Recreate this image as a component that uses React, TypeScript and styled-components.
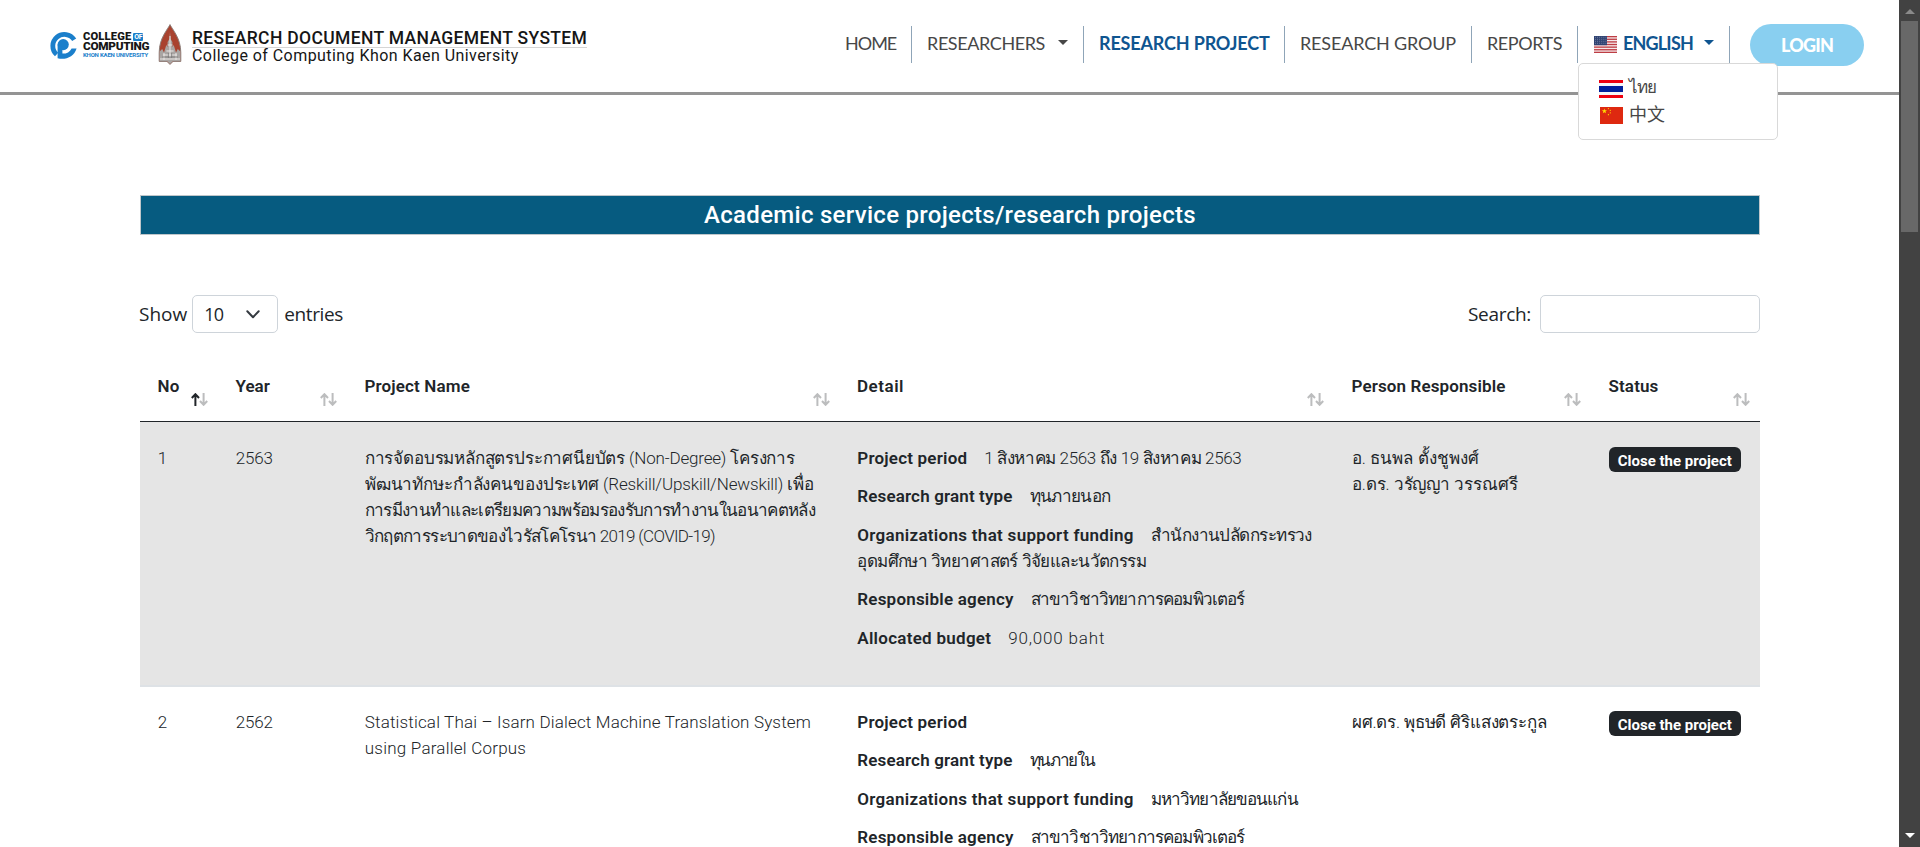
import React from 'react';
import styled, { createGlobalStyle } from 'styled-components';

const kanit = 'Roboto, "Noto Sans", sans-serif';
const navFont = 'Lato, "Noto Sans CJK SC", sans-serif';
const uiFont = '"Open Sans", "Noto Sans", sans-serif';

const GlobalStyle = createGlobalStyle`
  * { box-sizing: border-box; }
  body { margin: 0; background: #fff; color: #212529; font-family: ${kanit}; overflow: hidden; }
`;

const Window = styled.div`display: flex; width: 1920px; height: 847px; overflow: hidden;`;
const Page = styled.div`flex: 1; min-width: 0; overflow: hidden;`;

const Text = styled.span<{ $t?: number }>`letter-spacing: ${p => p.$t ?? 0}px; white-space: nowrap;`;

/* Header */
const Header = styled.header`
  display: flex; justify-content: space-between; height: 95px;
  border-bottom: 3px solid #949494; padding: 0 35px 0 48px;
`;
const Brand = styled.div`display: flex; align-items: flex-start; padding-top: 24px;`;
const CollegeMark = styled.svg`width: 30px; height: 30px; margin-top: 6px;`;
const CollegeText = styled.div`
  display: flex; flex-direction: column; margin: 8px 0 0 5px; width: 66px; color: #161616;
`;
const CollegeLine = styled.div<{ $size: number; $h: number; $blue?: boolean }>`
  display: flex; align-items: center; gap: 2px; height: ${p => p.$h}px;
  font-size: ${p => p.$size}px; line-height: ${p => p.$h}px;
  color: ${p => (p.$blue ? '#1b7fcb' : '#161616')}; font-weight: ${p => (p.$blue ? 700 : 900)};
`;
const OfBadge = styled.span`
  background: #1b7fcb; color: #fff; font-size: 7px; line-height: 8px; height: 8px; width: 10px;
  text-align: center; letter-spacing: -0.3px; font-weight: 700; border-radius: 1px;
`;
const Emblem = styled.svg`width: 24px; height: 41px; margin: 0 10px 0 9px;`;
const SystemTitle = styled.div`display: flex; flex-direction: column; width: 395px; margin-top: 4px; color: #161616;`;
const SystemName = styled.div`font-size: 17.5px; font-weight: 500; line-height: 20px; height: 20px; border-bottom: 1px solid #d5d5d5;`;
const SystemOrg = styled.div`font-size: 16px; line-height: 18px; margin-top: -1px;`;

const Nav = styled.nav`display: flex; align-items: flex-start; padding-top: 24px;`;
const NavItem = styled.div<{ $w: number; $active?: boolean }>`
  position: relative; display: flex; align-items: center; width: ${p => p.$w}px; height: 37px;
  margin-top: 2px; padding: 0 0 4px 15px; border-right: 1px solid #8fa5b8;
  font: ${p => (p.$active ? 700 : 400)} 18px ${navFont}; color: ${p => (p.$active ? '#0f5590' : '#474747')};
`;
const Caret = styled.i<{ $gap: number }>`
  margin-left: ${p => p.$gap}px; margin-top: 0; border: 5px solid transparent; border-top-color: currentColor; border-bottom: 0;
`;
const Flag = styled.svg<{ $w: number; $h: number }>`width: ${p => p.$w}px; height: ${p => p.$h}px; flex: none; margin-right: 6px;`;
const CurrentFlag = styled.span`display: flex; margin: 4px 0 0 1px;`;
const Menu = styled.div`
  position: absolute; left: 0; top: 37px; width: 200px; height: 77px; z-index: 2; background: #fff;
  border: 1px solid #d9d9d9; border-radius: 5px; padding: 11px 20px;
`;
const MenuItem = styled.div`
  display: flex; align-items: center; height: 27px; color: #474747; font: 400 17px/27px ${navFont};
`;
const Thai = styled(Text)`margin-top: -4px;`;
const Chinese = styled.span`font-size: 18px; font-weight: 400; margin-top: -2px;`;
const Login = styled.div`
  width: 114px; height: 42px; margin-left: 20px; border-radius: 21px; background: #89cff0; color: #fff;
  display: flex; align-items: center; justify-content: center; font: 900 18px ${navFont};
`;

/* Content */
const Main = styled.main`width: 1620px; margin: 100px 0 0 140px;`;
const Banner = styled.h4`
  margin: 0; height: 40px; border: 1px solid #bfc6ca; background: #065b80; color: #fff;
  font-weight: 500; font-size: 24px; line-height: 38px; text-align: center;
`;
const Controls = styled.div`
  display: flex; justify-content: space-between; align-items: center; height: 38px; margin: 60px 0 28px;
  font: 400 19px ${uiFont};
`;
const Length = styled.label`display: flex; align-items: center; margin-left: -1px;`;
const Select = styled.span`
  display: flex; align-items: center; justify-content: space-between; width: 86px; height: 38px;
  margin: 0 6px 0 5px; padding: 0 17px 0 11px; border: 1px solid #ced4da; border-radius: 5px; font-size: 18px;
`;
const Filter = styled.label`display: flex; align-items: center;`;
const Input = styled.span`width: 220px; height: 38px; margin-left: 9px; border: 1px solid #ced4da; border-radius: 5px;`;

const columns = '78px 129px 492.5px 494.5px 257px 169px';
const HeadRow = styled.div`
  display: grid; grid-template-columns: ${columns}; height: 61px; border-bottom: 1px solid #212529;
`;
const HeadCell = styled.div`
  display: flex; justify-content: space-between; padding: 12px 10px 0 17.5px; font-size: 17px; font-weight: 600; line-height: 26px;
`;
const SortIcon = styled.svg`width: 17px; height: 13px; margin-top: 20px; margin-left: auto; flex: none;`;
const Row = styled.div<{ $odd?: boolean }>`
  display: grid; grid-template-columns: ${columns}; height: 265px; padding-top: ${p => (p.$odd ? 23 : 22)}px;
  background: ${p => (p.$odd ? '#e5e5e5' : '#fff')}; border-bottom: 2px solid ${p => (p.$odd ? '#dee2e6' : '#fff')};
`;
const Cell = styled.div`padding-left: 17.8px; font-size: 17px; font-weight: 300; line-height: 26px;`;
const Line = styled.div`height: 26px; white-space: nowrap;`;
const Detail = styled.p`margin: 0 0 12.4px;`;
const Label = styled(Text)`font-weight: 600; margin-right: 17px;`;
const Badge = styled.span`
  display: flex; align-items: center; justify-content: center; width: 132px; height: 25px; margin-top: 2px;
  border-radius: 6px; background: #212529; color: #fff; font-size: 15px; font-weight: 700; line-height: 24px; padding-top: 3px;
`;

/* Browser scrollbar */
const Scrollbar = styled.div`
  width: 21px; height: 847px; background: #424242; display: flex; flex-direction: column; align-items: center;
`;
const Arrow = styled.i<{ $down?: boolean }>`
  border: 5px solid transparent;
  ${p => (p.$down
    ? 'border-top-color: #fff; border-bottom: 0; margin: auto 0 9px;'
    : 'border-bottom-color: #8a8a8a; border-top: 0; margin: 9px 0 7px;')}
`;
const Thumb = styled.div`width: 17px; height: 211px; background: #686868;`;

type Piece = [string, number];
interface Project {
  no: string;
  year: string;
  name: Piece[];
  details: { label: Piece; value: Piece[] }[];
  people: Piece[];
}

const labels: Record<string, Piece> = {
  period: ['Project period', 0.2],
  grant: ['Research grant type', 0.15],
  org: ['Organizations that support funding', 0.3],
  agency: ['Responsible agency', 0.21],
  budget: ['Allocated budget', 0.27],
};

const projects: Project[] = [
  {
    no: '1',
    year: '2563',
    name: [
      ['การจัดอบรมหลักสูตรประกาศนียบัตร (Non-Degree) โครงการ', -0.18],
      ['พัฒนาทักษะกำลังคนของประเทศ (Reskill/Upskill/Newskill) เพื่อ', -0.13],
      ['การมีงานทำและเตรียมความพร้อมรองรับการทำงานในอนาคตหลัง', -0.67],
      ['วิกฤตการระบาดของไวรัสโคโรนา 2019 (COVID-19)', -0.66],
    ],
    details: [
      { label: labels.period, value: [['1 สิงหาคม 2563 ถึง 19 สิงหาคม 2563', -0.37]] },
      { label: labels.grant, value: [['ทุนภายนอก', -0.63]] },
      {
        label: labels.org,
        value: [['สำนักงานปลัดกระทรวง', -0.55], ['อุดมศึกษา วิทยาศาสตร์ วิจัยและนวัตกรรม', -0.56]],
      },
      { label: labels.agency, value: [['สาขาวิชาวิทยาการคอมพิวเตอร์', -0.83]] },
      { label: labels.budget, value: [['90,000 baht', 0.83]] },
    ],
    people: [['อ. ธนพล ตั้งชูพงศ์', 0.05], ['อ.ดร. วรัญญา วรรณศรี', -0.08]],
  },
  {
    no: '2',
    year: '2562',
    name: [
      ['Statistical Thai – Isarn Dialect Machine Translation System', 0.16],
      ['using Parallel Corpus', 0.22],
    ],
    details: [
      { label: labels.period, value: [] },
      { label: labels.grant, value: [['ทุนภายใน', -1.29]] },
      { label: labels.org, value: [['มหาวิทยาลัยขอนแก่น', -0.87]] },
      { label: labels.agency, value: [['สาขาวิชาวิทยาการคอมพิวเตอร์', -0.83]] },
    ],
    people: [['ผศ.ดร. พุธษดี ศิริแสงตระกูล', -0.16]],
  },
];

const headings: Piece[] = [
  ['No', 0.17], ['Year', 0], ['Project Name', 0.14], ['Detail', 0.52], ['Person Responsible', 0.12], ['Status', 0.14],
];

function Sort({ asc }: { asc?: boolean }) {
  return (
    <SortIcon viewBox="0 0 17 13" fill="none" strokeWidth="2">
      <path d="M4.4 13V1.4M0.8 5L4.4 1.2L8 5" stroke={asc ? '#212529' : '#bcbdbe'} />
      <path d="M12.6 0V11.6M9 8L12.6 11.8L16.2 8" stroke="#bcbdbe" />
    </SortIcon>
  );
}

function UsFlag() {
  const stripes = [0, 1, 2, 3, 4, 5, 6];
  return (
    <Flag $w={23} $h={17} viewBox="0 0 23 17">
      <rect width="23" height="17" fill="#f6e9ea" />
      {stripes.map(i => <rect key={i} y={i * 2.62} width="23" height="1.31" fill="#bd3d44" />)}
      <rect width="13" height="9.2" fill="#2f4373" />
      {[1.3, 3.3, 5.3, 7.3].map(y => (
        <path key={y} d={`M1 ${y}H12.5`} stroke="#8791ad" strokeWidth="0.8" strokeDasharray="0.9 1.2" />
      ))}
    </Flag>
  );
}

function ThaiFlag() {
  return (
    <Flag $w={24} $h={18} viewBox="0 0 24 18">
      <rect width="24" height="18" fill="#f4f5f8" />
      <rect width="24" height="3" fill="#ed0010" />
      <rect y="6" width="24" height="6" fill="#00209c" />
      <rect y="15" width="24" height="3" fill="#ed0010" />
    </Flag>
  );
}

function ChinaFlag() {
  return (
    <Flag $w={24} $h={17} viewBox="-1 0 24 17">
      <rect width="23" height="17" fill="#de2910" />
      <path d="M4.4 1.6l.65 1.75h1.9l-1.5 1.15.55 1.8-1.6-1.1-1.6 1.1.55-1.8-1.5-1.15h1.9z" fill="#ffde00" />
      <g fill="#ffde00">
        <circle cx="8.4" cy="1.6" r="0.6" /><circle cx="10.3" cy="3.3" r="0.6" />
        <circle cx="10.3" cy="5.8" r="0.6" /><circle cx="8.4" cy="7.7" r="0.6" />
      </g>
    </Flag>
  );
}

function BrandBlock() {
  return (
    <Brand>
      <CollegeMark viewBox="0 0 30 30" fill="none">
        <path d="M26.2 9.8A11.6 11.6 0 1 0 8.6 24.6" stroke="#1b7fcb" strokeWidth="4.8" />
        <circle cx="15.2" cy="14.6" r="5.6" fill="#1b7fcb" />
        <path d="M9.6 14.6V28.2C17.5 30.4 26.2 26.6 28.6 18.4H23.6C21.8 22 18.4 23.8 14.4 23.6V17Z" fill="#1b7fcb" />
      </CollegeMark>
      <CollegeText>
        <CollegeLine $size={11.2} $h={9}><Text $t={0.15}>COLLEGE</Text><OfBadge>OF</OfBadge></CollegeLine>
        <CollegeLine $size={11.8} $h={10}><Text $t={-0.32}>COMPUTING</Text></CollegeLine>
        <CollegeLine $size={6} $h={7} $blue><Text $t={-0.19}>KHON KAEN UNIVERSITY</Text></CollegeLine>
      </CollegeText>
      <Emblem viewBox="0 0 24 41">
        <path d="M12 0.6C14 5 22.8 14 22.8 28.5V37.4H15L12 40.4L9 37.4H1.2V28.5C1.2 14 10 5 12 0.6Z" fill="#a9422f" stroke="#8d7f7a" />
        <path d="M1.6 37V27.5L4.2 25L6 28.6L8.3 21L9.6 23V18L11.4 15L12 8L12.6 15L14.4 18V23L15.7 21L18 28.6L19.8 25L22.4 27.5V37H15L12 40L9 37Z" fill="#a9a5a3" />
        <path d="M12 12V33M9.6 21H14.4M8.4 27H15.6M5 31H19M2 35H22M6 29V36M18 29V36" stroke="#e9e6e4" strokeWidth="1" fill="none" />
        <path d="M10.4 29V34M13.6 29V34M4 33H20" stroke="#777" strokeWidth="0.7" />
      </Emblem>
      <SystemTitle>
        <SystemName><Text $t={0.35}>RESEARCH DOCUMENT MANAGEMENT SYSTEM</Text></SystemName>
        <SystemOrg><Text $t={0.44}>College of Computing Khon Kaen University</Text></SystemOrg>
      </SystemTitle>
    </Brand>
  );
}

export default function App() {
  return (
    <Window>
      <GlobalStyle />
      <Page>
        <Header>
          <BrandBlock />
          <Nav>
            <NavItem $w={82}><Text $t={-1}>HOME</Text></NavItem>
            <NavItem $w={172}><Text $t={-0.4}>RESEARCHERS</Text><Caret $gap={13} /></NavItem>
            <NavItem $w={201} $active><Text $t={-0.17}>RESEARCH PROJECT</Text></NavItem>
            <NavItem $w={187}><Text $t={-0.17}>RESEARCH GROUP</Text></NavItem>
            <NavItem $w={106}><Text $t={-0.44}>REPORTS</Text></NavItem>
            <NavItem $w={152} $active>
              <CurrentFlag><UsFlag /></CurrentFlag><Text $t={-0.82}>ENGLISH</Text><Caret $gap={11} />
              <Menu>
                <MenuItem><ThaiFlag /><Thai $t={-1}>ไทย</Thai></MenuItem>
                <MenuItem><ChinaFlag /><Chinese>中文</Chinese></MenuItem>
              </Menu>
            </NavItem>
            <Login><Text $t={-0.8}>LOGIN</Text></Login>
          </Nav>
        </Header>
        <Main>
          <Banner><Text $t={0.29}>Academic service projects/research projects</Text></Banner>
          <Controls>
            <Length>
              <Text>Show</Text>
              <Select>
                <Text $t={-0.8}>10</Text>
                <svg width="14" height="9" viewBox="0 0 14 9" fill="none">
                  <path d="M1.3 1.3L7 7.2L12.7 1.3" stroke="#343a40" strokeWidth="2" strokeLinecap="round" strokeLinejoin="round" />
                </svg>
              </Select>
              <Text $t={-0.4}>entries</Text>
            </Length>
            <Filter><Text $t={-0.31}>Search:</Text><Input /></Filter>
          </Controls>
          <HeadRow>
            {headings.map(([title, t], i) => (
              <HeadCell key={title}><Text $t={t}>{title}</Text><Sort asc={i === 0} /></HeadCell>
            ))}
          </HeadRow>
          {projects.map((p, i) => (
            <Row key={p.no} $odd={i % 2 === 0}>
              <Cell>{p.no}</Cell>
              <Cell><Text $t={-0.18}>{p.year}</Text></Cell>
              <Cell>{p.name.map(([s, t]) => <Line key={s}><Text $t={t}>{s}</Text></Line>)}</Cell>
              <Cell>
                {p.details.map(d => (
                  <Detail key={d.label[0]}>
                    <Label $t={d.label[1]}>{d.label[0]}</Label>
                    {d.value.map(([s, t], n) => (
                      <React.Fragment key={s}>{n > 0 && <br />}<Text $t={t}>{s}</Text></React.Fragment>
                    ))}
                  </Detail>
                ))}
              </Cell>
              <Cell>{p.people.map(([s, t]) => <Line key={s}><Text $t={t}>{s}</Text></Line>)}</Cell>
              <Cell><Badge><Text>Close the project</Text></Badge></Cell>
            </Row>
          ))}
        </Main>
      </Page>
      <Scrollbar><Arrow /><Thumb /><Arrow $down /></Scrollbar>
    </Window>
  );
}
